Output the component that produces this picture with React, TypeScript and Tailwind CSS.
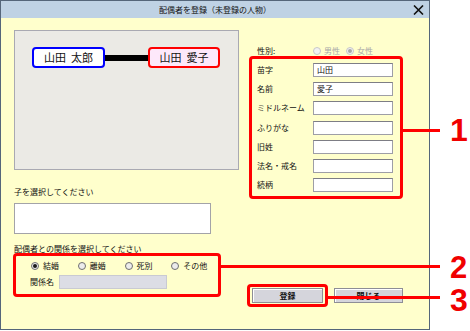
import React from 'react';

function Radio({ checked, disabled }: { checked?: boolean; disabled?: boolean }) {
  return (
    <span
      className={`flex h-[8px] w-[8px] shrink-0 items-center justify-center rounded-full border ${
        disabled ? 'border-[#c8c8c8] bg-[#f2f2f2]' : 'border-[#6f6f6f] bg-[#ececec]'
      }`}
    >
      {checked && (
        <span className={`h-[4px] w-[4px] rounded-full ${disabled ? 'bg-[#a8a8a8]' : 'bg-[#1a1a1a]'}`} />
      )}
    </span>
  );
}

const fields: [string, string][] = [
  ['苗字', '山田'],
  ['名前', '愛子'],
  ['ミドルネーム', ''],
  ['ふりがな', ''],
  ['旧姓', ''],
  ['法名・戒名', ''],
  ['続柄', ''],
];

const relations = [
  { label: '結婚', checked: true },
  { label: '離婚', checked: false },
  { label: '死別', checked: false },
  { label: 'その他', checked: false },
];

export default function App() {
  return (
    <div className="relative flex h-[331px] w-[470px] bg-white font-['Noto_Sans_CJK_JP',sans-serif] text-[#111]">
      <div className="flex h-[330px] w-[430px] flex-col border border-[#55667a] bg-[#ffffcc]">
        {/* title bar */}
        <div className="relative flex h-[17px] items-center justify-center bg-[#bfd2e4] text-[8px] leading-none">
          配偶者を登録（未登録の人物）
          <svg className="absolute right-[5px] top-[4px]" width="11" height="10" viewBox="0 0 11 10">
            <path d="M1 0.5 L10 9.5 M10 0.5 L1 9.5" stroke="#111" strokeWidth="1.6" />
          </svg>
        </div>

        <div className="flex pl-[13px] pt-[12px]">
          {/* left column */}
          <div className="flex w-[225px] flex-col">
            <div className="flex h-[140px] items-start border border-[#a9a9b2] bg-[#ebeae5] pl-[17px] pt-[16px]">
              <div className="flex items-center">
                <div className="flex h-[21px] w-[73px] items-center justify-center gap-[5px] rounded-[4px] border-2 border-[#0000ff] bg-white text-[11px] leading-none">
                  <span>山田</span>
                  <span>太郎</span>
                </div>
                <div className="h-[6px] w-[43px] bg-black" />
                <div className="flex h-[21px] w-[72px] items-center justify-center gap-[5px] rounded-[4px] border-2 border-[#ff0000] bg-[#fde8fa] text-[11px] leading-none">
                  <span>山田</span>
                  <span>愛子</span>
                </div>
              </div>
            </div>

            <div className="mt-[17px] text-[8px] leading-[10px]">子を選択してください</div>
            <div className="mt-[6px] h-[31px] w-[197px] border border-[#a3a3a8] bg-white" />

            <div className="mt-[10px] text-[8px] leading-[9px]">配偶者との関係を選択してください</div>
            <div className="-ml-[1px] h-[44px] w-[208px] rounded-[4px] border-[3px] border-[#ff0000]">
              <div className="mt-[5px] flex h-[10px] items-center pl-[15px]">
                {relations.map((r) => (
                  <div key={r.label} className="flex w-[50px] items-center gap-[4px] text-[8px] leading-none">
                    <Radio checked={r.checked} />
                    <span>{r.label}</span>
                  </div>
                ))}
              </div>
              <div className="mt-[4px] flex h-[14px] items-center pl-[14px]">
                <span className="w-[29px] text-[8px] leading-none">関係名</span>
                <div className="h-[14px] w-[108px] border border-[#c9cad2] bg-[#dcdde5]" />
              </div>
            </div>
          </div>

          {/* right column */}
          <div className="ml-[10px] flex w-[154px] flex-col">
            <div className="mt-[16px] flex h-[10px] items-center pl-[8px] text-[8px] leading-none">
              <span className="w-[56px]">性別:</span>
              <div className="flex w-[33px] items-center gap-[3px] text-[#a8a8a8]">
                <Radio disabled />
                <span>男性</span>
              </div>
              <div className="flex items-center gap-[3px] text-[#a8a8a8]">
                <Radio disabled checked />
                <span>女性</span>
              </div>
            </div>

            <div className="flex h-[143px] w-[154px] flex-col gap-[5.2px] rounded-[4px] border-[3px] border-[#ff0000] pl-[5px] pt-[4px]">
              {fields.map(([label, value]) => (
                <div key={label} className="flex h-[14px] items-center">
                  <span className="w-[56px] text-[8px] leading-none">{label}</span>
                  <div className="flex h-[14px] w-[80px] items-center border border-[#9e9ea6] border-t-[#7d7d85] bg-white pl-[3px] text-[8px] leading-none">
                    {value}
                  </div>
                </div>
              ))}
            </div>

            <div className="-ml-[2px] mt-[85px] flex items-center">
              <div className="rounded-[4px] border-[3px] border-[#ff0000] px-[2px] py-[1px]">
                <button className="flex h-[15px] w-[71px] items-center justify-center border border-[#8e8e96] bg-[#d5d5dc] text-[8px] font-bold leading-none shadow-[inset_1px_1px_0_#ffffff]">
                  登録
                </button>
              </div>
              <button className="ml-[6px] flex h-[15px] w-[71px] items-center justify-center border border-[#8e8e96] bg-[#d5d5dc] text-[8px] font-bold leading-none shadow-[inset_1px_1px_0_#ffffff]">
                閉じる
              </button>
            </div>
          </div>
        </div>
      </div>

      {/* callouts */}
      <div className="absolute left-[403px] top-[129px] h-[3px] w-[37px] bg-[#ff0000]" />
      <div className="absolute left-[221px] top-[265px] h-[3px] w-[219px] bg-[#ff0000]" />
      <div className="absolute left-[328px] top-[296px] h-[3px] w-[112px] bg-[#ff0000]" />
      <span className="absolute left-[450px] top-[118px] font-['Liberation_Sans',sans-serif] text-[32px] font-bold leading-[24px] text-[#f00000]">1</span>
      <span className="absolute left-[450px] top-[256px] font-['Liberation_Sans',sans-serif] text-[31px] font-bold leading-[24px] text-[#f00000]">2</span>
      <span className="absolute left-[450px] top-[288px] font-['Liberation_Sans',sans-serif] text-[32px] font-bold leading-[24px] text-[#f00000]">3</span>
    </div>
  );
}
